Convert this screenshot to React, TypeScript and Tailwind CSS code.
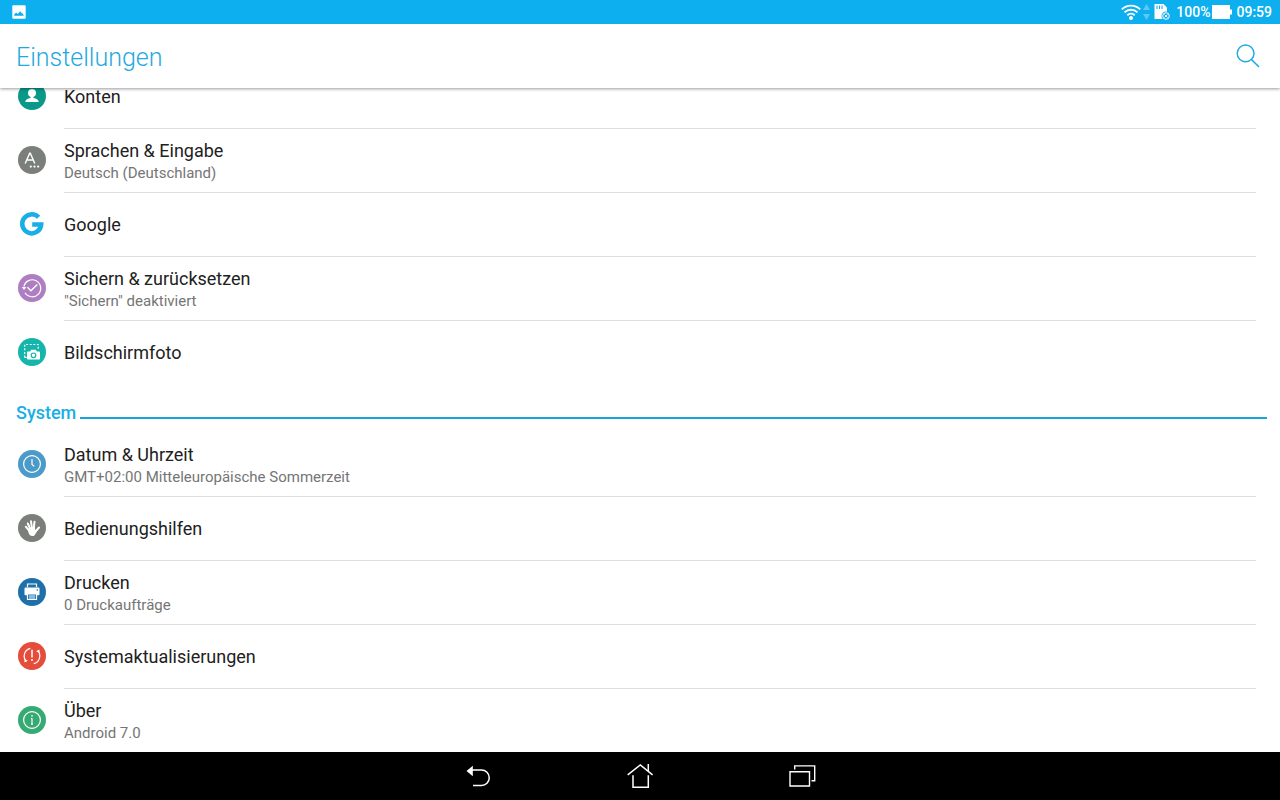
import type { ReactNode } from "react";

type Item = {
  title: string;
  summary?: string;
  icon: ReactNode;
};

function Disc({ color, children }: { color: string; children: ReactNode }) {
  return (
    <svg viewBox="0 0 28 28" className="size-7" aria-hidden="true">
      <circle cx="14" cy="14" r="14" fill={color} />
      {children}
    </svg>
  );
}

const AccountIcon = (
  <Disc color="#0a9889">
    <circle cx="14" cy="11" r="4" fill="#fff" />
    <path
      fill="#fff"
      d="M12.600 14h2.800v1.900c3 .4 5.100 1.700 5.400 4.100H7.200c.3-2.400 2.400-3.700 5.400-4.100z"
    />
  </Disc>
);

const LanguageIcon = (
  <Disc color="#7b7f7c">
    <path d="M7.200 17.500 11.700 7.300h.6l4.500 10.200M8.800 14h6.400" fill="none" stroke="#fff" strokeWidth="1.400" />
    <g fill="#fff">
      <circle cx="12.800" cy="20.600" r="1.100" />
      <circle cx="16.500" cy="20.600" r="1.100" />
      <circle cx="20.200" cy="20.600" r="1.100" />
    </g>
  </Disc>
);

const GoogleIcon = (
  <svg viewBox="0 0 28 28" className="size-7" aria-hidden="true">
    <path
      d="M20.600 7.300A9.500 9.500 0 1 0 23.200 14.500H14.200"
      fill="none"
      stroke="#19aee6"
      strokeWidth="4.500"
    />
  </svg>
);

const BackupIcon = (
  <Disc color="#ae7ec3">
    <g fill="none" stroke="#fff" strokeWidth="1.200">
      <path d="M5.900 12.500A8.500 8.500 0 1 1 7 18.800" />
      <path d="m9.500 13.200 3.400 3.500 6.400-6.200" strokeWidth="1.400" />
    </g>
    <path d="M3.800 12.900h4.600L6 16z" fill="#fff" />
  </Disc>
);

const ScreenshotIcon = (
  <Disc color="#14b5ab">
    <path
      d="M6.700 19.500v-13h13.500v5M6.700 19.500h2"
      fill="none"
      stroke="#fff"
      strokeWidth="1.200"
      strokeDasharray="2 1.600"
    />
    <path
      d="M9.800 13.500h2.400l.9-1.700h4.800l.9 1.700h2.400q.8 0 .8.800v6.400q0 .8-.8.800H9.800q-.8 0-.8-.8v-6.400q0-.8.800-.8z"
      fill="#fff"
    />
    <circle cx="15.500" cy="17.300" r="2.300" fill="none" stroke="#14b5ab" strokeWidth="1.200" />
  </Disc>
);

const ClockIcon = (
  <Disc color="#4a9bc9">
    <g fill="none" stroke="#fff" strokeWidth="1.200">
      <circle cx="14" cy="14" r="8.400" />
      <path d="M14 9v5.400l2.300 2" />
    </g>
  </Disc>
);

const HandIcon = (
  <Disc color="#7b7f7c">
    <g stroke="#fff" strokeLinecap="round" strokeWidth="2" fill="none">
      <path d="m11.500 17-3.700-4.300" />
      <path d="M12.300 15 9.800 9.500" />
      <path d="M14 14.500 13 7.300" />
      <path d="m15.800 14.500.7-6.800" />
      <path d="m17 18 4-4.500" />
    </g>
    <path d="M10.800 14 16.800 13l.5 3.300 2.200-.3-2.200 4.200c-.8 1.400-1.600 1.800-2.900 1.800-2.300 0-3.400-1.300-4.200-4.500z" fill="#fff" />
  </Disc>
);

const PrinterIcon = (
  <Disc color="#1f70a9">
    <path d="M9.500 9V6h9v3" fill="none" stroke="#fff" strokeWidth="1.200" />
    <path d="M7.500 9.500h13q1 0 1 1v5.800q0 1-1 1h-13q-1 0-1-1v-5.800q0-1 1-1z" fill="#fff" />
    <path d="M9.500 16h9v5.500h-9z" fill="#1f70a9" stroke="#fff" strokeWidth="1.200" />
    <path d="M11 18h6M11 20h6" stroke="#fff" />
    <circle cx="19.300" cy="12" r=".8" fill="#1f70a9" />
  </Disc>
);

const UpdateIcon = (
  <Disc color="#e64c3a">
    <g fill="none" stroke="#fff" strokeWidth="1.200">
      <path d="M12.300 6.400A7.800 7.800 0 0 0 8.300 19.300" />
      <path d="M15.700 21.600A7.800 7.800 0 0 0 19.700 8.700" />
      <path d="M14 7.800v7.600M14 17v2" strokeWidth="1.500" />
    </g>
    <path d="m18.200 9.300 3.300-1.800v3.500zM9.800 18.700l-3.300 1.800v-3.500z" fill="#fff" />
  </Disc>
);

const InfoIcon = (
  <Disc color="#35aa73">
    <circle cx="14" cy="14" r="8.400" fill="none" stroke="#fff" strokeWidth="1.200" />
    <path d="M14 9v1.700M14 12.200v6.300M13 12.500h1M13 18.200h2" stroke="#fff" strokeWidth="1.200" />
  </Disc>
);

const personal: Item[] = [
  { title: "Konten", icon: AccountIcon },
  { title: "Sprachen & Eingabe", summary: "Deutsch (Deutschland)", icon: LanguageIcon },
  { title: "Google", icon: GoogleIcon },
  { title: "Sichern & zurücksetzen", summary: "\"Sichern\" deaktiviert", icon: BackupIcon },
  { title: "Bildschirmfoto", icon: ScreenshotIcon },
];

const system: Item[] = [
  { title: "Datum & Uhrzeit", summary: "GMT+02:00 Mitteleuropäische Sommerzeit", icon: ClockIcon },
  { title: "Bedienungshilfen", icon: HandIcon },
  { title: "Drucken", summary: "0 Druckaufträge", icon: PrinterIcon },
  { title: "Systemaktualisierungen", icon: UpdateIcon },
  { title: "Über", summary: "Android 7.0", icon: InfoIcon },
];

function SettingsList({ items }: { items: Item[] }) {
  return (
    <ul>
      {items.map((item, index) => (
        <li key={item.title}>
          <button type="button" className="flex h-16 w-full items-center pr-6 pl-[18px] text-left">
            {item.icon}
            <span
              className={
                index > 0
                  ? "ml-[18px] flex h-full flex-1 flex-col justify-center border-t border-[#dedede]"
                  : "ml-[18px] flex h-full flex-1 flex-col justify-center border-t border-transparent"
              }
            >
              <span className="text-[18px] leading-6 text-[#212121]">{item.title}</span>
              {item.summary && <span className="text-[15px] leading-5 text-[#757575]">{item.summary}</span>}
            </span>
          </button>
        </li>
      ))}
    </ul>
  );
}

function StatusBar() {
  return (
    <div className="relative z-20 flex h-6 shrink-0 items-center justify-between bg-[#0dafef] pr-2 pl-3 text-[14px] leading-6 font-medium text-white">
      <svg viewBox="0 0 14 14" className="size-[14px]" aria-hidden="true">
        <rect x=".3" y=".3" width="13.400" height="13.400" rx="1" fill="#fff" />
        <path d="M2.200 10.800V9.500l2-1.900 1.500 1.400 2.500-2.800 1.600 2 1 .2 1 2.400z" fill="#0dafef" />
      </svg>
      <div className="flex items-center">
        <svg viewBox="0 0 50 16" className="mr-[5px] h-4 w-[50px]" aria-hidden="true">
          <g fill="none" stroke="#fff" strokeWidth="1.900">
            <path d="M.8 5.400a13 13 0 0 1 18.400 0" />
            <path d="M3.500 8.400a9.200 9.200 0 0 1 13 0" />
            <path d="M6.300 11.300a5.300 5.300 0 0 1 7.400 0" />
          </g>
          <circle cx="10" cy="14" r="2" fill="#fff" />
          <path d="m22 6 3.500-6L29 6zM22 10h7l-3.500 6z" fill="#5cc9f5" />
          <path d="M34 0h8.500L46 3.500V15H33.500V.5z" fill="#fff" />
          <path d="M36 1.500V5M38.500 1.500V5M41 1.500V5" stroke="#0dafef" strokeWidth="1.100" />
          <circle cx="45" cy="12" r="4.500" fill="#0dafef" />
          <circle cx="45" cy="12" r="3.300" fill="none" stroke="#fff" />
          <path d="m43.500 10.500 3 3m0-3-3 3" stroke="#fff" />
        </svg>
        <span>100%</span>
        <svg viewBox="0 0 20 14" className="mr-1 ml-[2px] h-[14px] w-5" aria-hidden="true">
          <path d="M0 0h18v4.500h2v5h-2V14H0z" fill="#fff" />
        </svg>
        <span>09:59</span>
      </div>
    </div>
  );
}

function NavigationBar() {
  return (
    <nav className="flex h-12 shrink-0 justify-center bg-black">
      <button type="button" aria-label="Zurück" className="flex w-[162px] items-center justify-center">
        <svg viewBox="0 0 28 28" className="size-7" aria-hidden="true">
          <path d="M8 8h9.500a7.400 7.400 0 0 1 0 15.500H9" fill="none" stroke="#fff" strokeWidth="1.500" />
          <path d="M2.500 9 8.800 3.800v10.400z" fill="#fff" />
        </svg>
      </button>
      <button type="button" aria-label="Startseite" className="flex w-[162px] items-center justify-center">
        <svg viewBox="0 0 28 28" className="size-7" aria-hidden="true">
          <g fill="none" stroke="#fff" strokeWidth="1.500">
            <path d="M1.700 12.800 14.300 2.900l12.300 9.900" />
            <path d="M22.300 2v7M7 13.300v11.900h15.300V13.300" />
          </g>
        </svg>
      </button>
      <button type="button" aria-label="Übersicht" className="flex w-[162px] items-center justify-center">
        <svg viewBox="0 0 28 28" className="size-7" aria-hidden="true">
          <g fill="none" stroke="#fff" strokeWidth="1.400">
            <path d="M2 9.700h19.500V24H2z" />
            <path d="M6.700 7.500V3.900h20v14.800h-3.200" />
          </g>
        </svg>
      </button>
    </nav>
  );
}

export default function App() {
  return (
    <div className="flex h-screen flex-col overflow-hidden bg-white font-['Roboto',sans-serif]">
      <StatusBar />
      <header className="relative z-10 flex h-16 shrink-0 items-center justify-between bg-white pr-5 pl-4 shadow-[0_1px_3px_rgba(0,0,0,0.4)]">
        <h1 className="pt-1 text-[25px] leading-8 font-light text-[#1fa9e1]">Einstellungen</h1>
        <button type="button" aria-label="Suchen">
          <svg viewBox="0 0 24 24" className="size-6" aria-hidden="true">
            <g fill="none" stroke="#1fa9e1" strokeWidth="1.400">
              <circle cx="9.600" cy="9.400" r="8.400" />
              <path d="m15.500 15.500 7.500 7.500" strokeWidth="1.600" />
            </g>
          </svg>
        </button>
      </header>
      <main className="min-h-0 flex-1 overflow-hidden">
        <div className="-mt-6">
          <SettingsList items={personal} />
          <div className="flex h-12 items-center gap-1 pt-[10px] pr-[13px] pl-4">
            <h2 className="text-[18px] leading-6 font-medium text-[#19aee6]">System</h2>
            <div className="mt-[9px] h-[2px] flex-1 bg-[#1ba3dc]" />
          </div>
          <SettingsList items={system} />
        </div>
      </main>
      <NavigationBar />
    </div>
  );
}
